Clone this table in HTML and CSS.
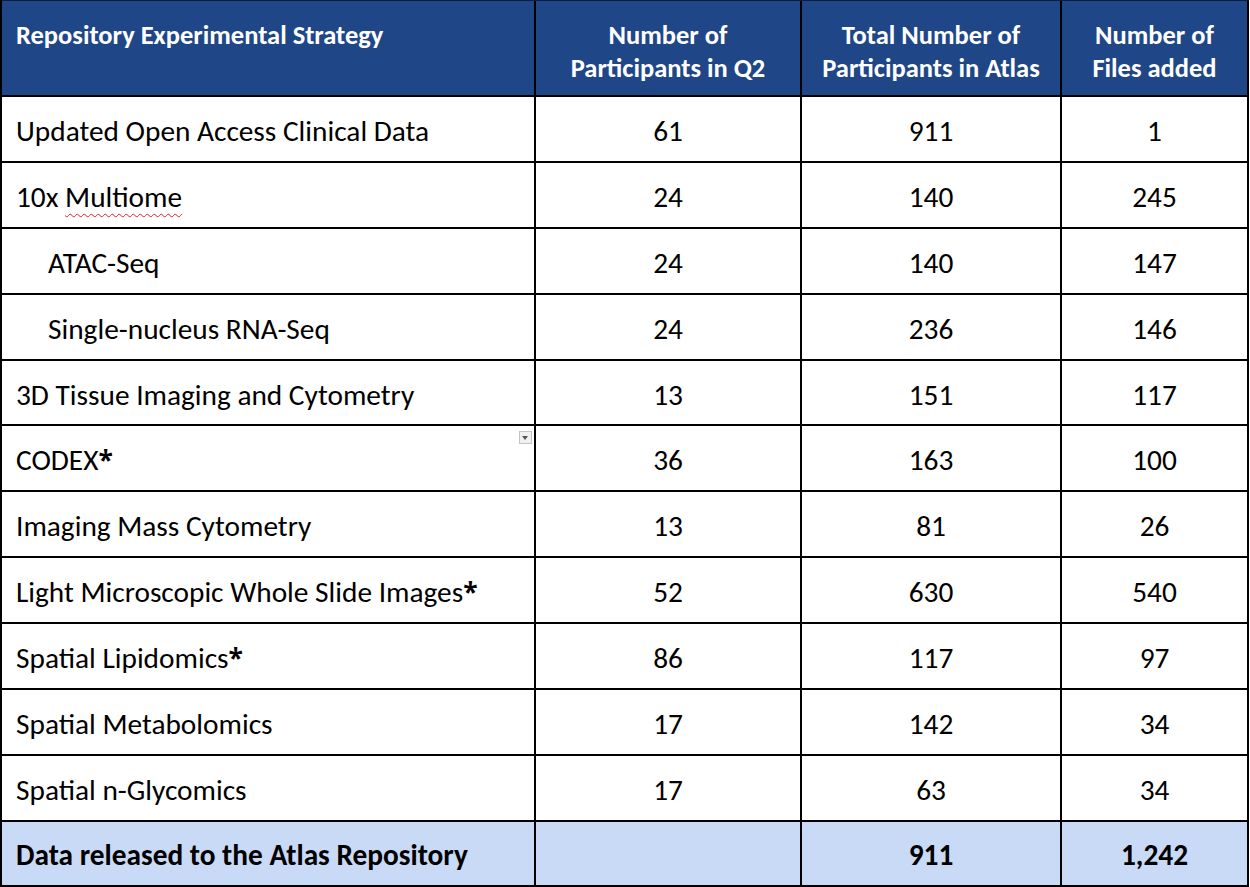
FILE: index.html
```html
<!DOCTYPE html>
<html lang="en">
<head>
<meta charset="utf-8">
<title>Repository Experimental Strategy</title>
<link rel="stylesheet" href="styles.css">
</head>
<body>
<table class="data">
  <colgroup>
    <col class="c1"><col class="c2"><col class="c3"><col class="c4">
  </colgroup>
  <thead>
    <tr class="head">
      <th class="label">Repository Experimental Strategy</th>
      <th>Number of<br>Participants in Q2</th>
      <th>Total Number of<br>Participants in Atlas</th>
      <th>Number of<br>Files added</th>
    </tr>
  </thead>
  <tbody>
    <tr><td class="label">Updated Open Access Clinical Data</td><td>61</td><td>911</td><td>1</td></tr>
    <tr><td class="label">10x <span class="spell">Multiome</span></td><td>24</td><td>140</td><td>245</td></tr>
    <tr><td class="label sub">ATAC-Seq</td><td>24</td><td>140</td><td>147</td></tr>
    <tr><td class="label sub">Single-nucleus RNA-Seq</td><td>24</td><td>236</td><td>146</td></tr>
    <tr><td class="label">3D Tissue Imaging and Cytometry</td><td>13</td><td>151</td><td>117</td></tr>
    <tr><td class="label has-menu">CODEX<span class="star">*</span><span class="dropdown"></span></td><td>36</td><td>163</td><td>100</td></tr>
    <tr><td class="label">Imaging Mass Cytometry</td><td>13</td><td>81</td><td>26</td></tr>
    <tr><td class="label">Light Microscopic Whole Slide Images<span class="star">*</span></td><td>52</td><td>630</td><td>540</td></tr>
    <tr><td class="label">Spatial Lipidomics<span class="star">*</span></td><td>86</td><td>117</td><td>97</td></tr>
    <tr><td class="label">Spatial Metabolomics</td><td>17</td><td>142</td><td>34</td></tr>
    <tr><td class="label">Spatial n-Glycomics</td><td>17</td><td>63</td><td>34</td></tr>
    <tr class="total"><td class="label">Data released to the Atlas Repository</td><td></td><td>911</td><td>1,242</td></tr>
  </tbody>
</table>
</body>
</html>
```
FILE: styles.css
```css
html, body {
  margin: 0;
  padding: 0;
  background: #ffffff;
}

body {
  font-family: "Carlito", "Lato", "Liberation Sans", sans-serif;
  color: #000000;
}

.data {
  border-collapse: separate;
  border-spacing: 0;
  table-layout: fixed;
  width: 1249px;
  border-top: 1px solid #0b1d3d;
  border-left: 2px solid #000000;
}

.c1 { width: 534px; }
.c2 { width: 266px; }
.c3 { width: 260px; }
.c4 { width: 187px; }

.data th,
.data td {
  box-sizing: border-box;
  border-right: 2px solid #000000;
  border-bottom: 2px solid #000000;
  padding: 0 14px;
  font-size: 29.33px;
  text-align: center;
  white-space: nowrap;
}

.head th {
  height: 96px;
  background: #1f4687;
  color: #ffffff;
  font-size: 26.5px;
  font-weight: 700;
  vertical-align: top;
  padding-top: 18px;
  line-height: 33px;
}

.data td {
  height: 65.9px;
  vertical-align: middle;
  line-height: 36px;
  padding-top: 4px;
}

.data .label {
  text-align: left;
}

.data .sub {
  padding-left: 46px;
}

.star {
  font-family: "Open Sans", "Lato", sans-serif;
  font-weight: 700;
  font-size: 0.9em;
  position: relative;
  top: -1px;
}

.spell {
  text-decoration: underline wavy #e02020;
  text-decoration-thickness: 1px;
  text-underline-offset: 6px;
}

.has-menu {
  position: relative;
}

.dropdown {
  position: absolute;
  top: 5px;
  right: 2px;
  width: 11px;
  height: 11px;
  border: 1px solid #c4c4c4;
  background: #f0f0f0;
}

.dropdown::after {
  content: "";
  position: absolute;
  left: 2px;
  top: 4px;
  border-left: 3.5px solid transparent;
  border-right: 3.5px solid transparent;
  border-top: 4px solid #555555;
}

.total td {
  height: 65px;
  background: #c9daf6;
  font-weight: 700;
}
```
